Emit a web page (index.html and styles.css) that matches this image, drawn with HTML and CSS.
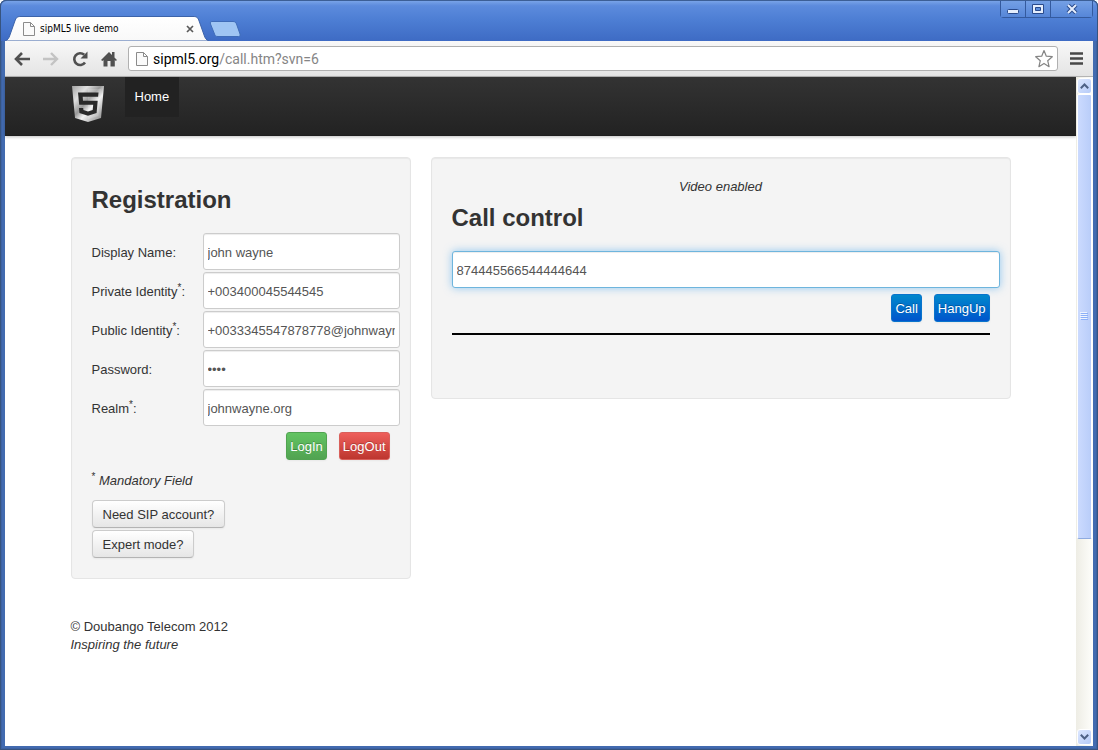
FILE: index.html
```html
<!DOCTYPE html>
<html lang="en">
<head>
  <meta charset="UTF-8" />
  <meta name="viewport" content="width=device-width, initial-scale=1.0"/>
  <title>sipML5 live demo</title>
  <link rel="stylesheet" href="styles.css">
</head>
<body>
  <div class="window">

    <!-- Title bar -->
    <div class="titlebar">
      <div class="tab">
        <svg class="tab-shape" viewBox="0 0 206 25" preserveAspectRatio="none">
          <defs>
            <linearGradient id="tabFill" x1="0" y1="0" x2="0" y2="1">
              <stop offset="0" stop-color="#ffffff"/>
              <stop offset="1" stop-color="#f8f8f8"/>
            </linearGradient>
          </defs>
          <path d="M0 25 C3 24 4 22 5 19 L10 5 C11 2 12 0.5 15 0.5 L191 0.5 C194 0.5 195 2 196 5 L201 19 C202 22 203 24 206 25 Z" fill="url(#tabFill)" stroke="#3b62a8" stroke-width="1"/>
        </svg>
        <svg class="page-icon" viewBox="0 0 12 14"><path d="M1 .5h6.500L11.500 4.500v9H.5v-13zM7.500 .5v4h4" fill="#fafafa" stroke="#8b8b8b"/></svg>
        <span class="tab-title">sipML5 live demo</span>
        <button class="tab-close" aria-label="Close tab">
          <svg width="8" height="8" viewBox="0 0 8 8"><path d="M1 1l6 6M7 1L1 7" stroke="#5a5a5a" stroke-width="1.700"/></svg>
        </button>
      </div>
      <button class="new-tab" aria-label="New tab">
        <svg width="32" height="16" viewBox="0 0 32 16"><path d="M3 .5h21c2 0 3 1 3.500 2.500L31 13c.4 1.500 0 2.500-1.500 2.500H9C7 15.500 6 15 5.500 13L1.500 3C1 1.500 1.500 .5 3 .5z" fill="#9fc5f3" stroke="#3f6cb8"/></svg>
      </button>
      <div class="window-controls">
        <button aria-label="Minimize"><svg width="12" height="10" viewBox="0 0 12 10"><rect x=".5" y="5.500" width="11" height="4" rx="1" fill="#e4edfc" stroke="#294a8c"/></svg></button>
        <button aria-label="Maximize"><svg width="12" height="10" viewBox="0 0 12 10"><path d="M.5 .5h11v9H.5z" fill="#e4edfc" stroke="#294a8c"/><path d="M3.500 3.500h5v3h-5z" fill="#5d8edb" stroke="#294a8c"/></svg></button>
        <button class="wide" aria-label="Close"><svg width="12" height="10" viewBox="0 0 12 10"><path d="M2 1l8 8M10 1L2 9" stroke="#294a8c" stroke-width="4"/><path d="M2 1l8 8M10 1L2 9" stroke="#e4edfc" stroke-width="2"/></svg></button>
      </div>
    </div>

    <!-- Toolbar -->
    <div class="toolbar">
      <button class="tool" aria-label="Back"><svg width="16" height="14" viewBox="0 0 16 14"><path d="M8 1L2 7l6 6M2 7h14" fill="none" stroke="#505050" stroke-width="2.600"/></svg></button>
      <button class="tool" aria-label="Forward"><svg width="16" height="14" viewBox="0 0 16 14"><path d="M8 1l6 6-6 6M14 7H0" fill="none" stroke="#c3c3c3" stroke-width="2.400"/></svg></button>
      <button class="tool" aria-label="Reload"><svg width="16" height="16" viewBox="0 0 16 16"><path d="M13 11.500A5.900 5.900 0 1 1 12.200 3.800" fill="none" stroke="#505050" stroke-width="2.600"/><path d="M15.500 .5v7H8.500z" fill="#505050"/></svg></button>
      <button class="tool" aria-label="Home page"><svg width="16" height="16" viewBox="0 0 16 16"><path d="M8 1l3 3V1h2.500v5.500L16 9l-1.200 1-1-1v6.500H9.500V10h-3v5.500H2.500V9l-1 1L0 9z" fill="#505050"/></svg></button>
      <div class="address">
        <svg class="page-icon" viewBox="0 0 12 14"><path d="M1 .5h6.500L11.500 4.500v9H.5v-13zM7.500 .5v4h4" fill="#fafafa" stroke="#8b8b8b"/></svg>
        <span class="url"><span class="host">sipml5.org</span>/call.htm?svn=6</span>
        <svg width="20" height="19" viewBox="0 0 20 19"><path d="M10 1.500l2.300 5.700 6 .5-4.600 4 1.400 6-5.100-3.300-5.100 3.300 1.400-6-4.600-4 6-.5z" fill="#fff" stroke="#858585" stroke-width="1.200" stroke-linejoin="round"/></svg>
      </div>
      <button class="menu" aria-label="Menu"><svg width="13" height="13" viewBox="0 0 13 13"><path d="M0 1.500h13M0 6.500h13M0 11.500h13" stroke="#484848" stroke-width="2.600"/></svg></button>
    </div>

    <div class="viewport">
      <div class="page">
        <div class="navbar">
          <div class="container navbar-inner">
            <a class="brand" href="#" aria-label="sipML5">
              <svg width="34" height="38" viewBox="0 0 34 38">
                <defs>
                  <linearGradient id="shield" x1="0" y1="0" x2="1" y2="1">
                    <stop offset="0" stop-color="#a2a2a2"/>
                    <stop offset=".25" stop-color="#e0e0e0"/>
                    <stop offset=".45" stop-color="#999999"/>
                    <stop offset=".6" stop-color="#f2f2f2"/>
                    <stop offset="1" stop-color="#777777"/>
                  </linearGradient>
                </defs>
                <path d="M1 1h32l-3 32-13 4-13-4z" fill="url(#shield)"/>
                <path d="M17 4h13l-2.500 27L17 34z" fill="#fff" opacity=".18"/>
                <path d="M7 7.500h20.500l-.4 4.200H11.700l.3 4h14.700l-1.100 12.300-8.600 2.700-8.600-2.700-.4-5h4.200l.2 2 4.600 1.400 4.700-1.400.5-5.200H8.200z" fill="#2a2a2a"/>
              </svg>
            </a>
            <a class="nav-link" href="#">Home</a>
          </div>
        </div>

        <div class="container row">
          <!-- Registration -->
          <form class="well registration">
            <h2>Registration</h2>
            <div class="fields">
              <label for="displayName">Display Name:</label>
              <div><input type="text" id="displayName" value="john wayne"></div>
              <label for="privateIdentity">Private Identity<sup>*</sup>:</label>
              <div><input type="text" id="privateIdentity" value="+003400045544545"></div>
              <label for="publicIdentity">Public Identity<sup>*</sup>:</label>
              <div><input type="text" id="publicIdentity" value="+0033345547878778@johnwayn"></div>
              <label for="password">Password:</label>
              <div><input type="password" id="password" value="1234"></div>
              <label for="realm">Realm<sup>*</sup>:</label>
              <div><input type="text" id="realm" value="johnwayne.org"></div>
            </div>
            <div class="actions">
              <button type="button" class="btn btn-small btn-success">LogIn</button>
              <button type="button" class="btn btn-small btn-danger">LogOut</button>
            </div>
            <p class="mandatory"><sup>*</sup> <i>Mandatory Field</i></p>
            <div class="links">
              <button type="button" class="btn">Need SIP account?</button>
              <button type="button" class="btn">Expert mode?</button>
            </div>
          </form>

          <!-- Call control -->
          <form class="well call">
            <p class="status"><i>Video enabled</i></p>
            <h2>Call control</h2>
            <div><input type="text" class="focused" aria-label="Phone number" value="874445566544444644"></div>
            <div class="actions">
              <button type="button" class="btn btn-small btn-primary">Call</button>
              <button type="button" class="btn btn-small btn-primary">HangUp</button>
            </div>
            <hr>
          </form>
        </div>

        <footer class="container">
          <p>© Doubango Telecom 2012<br><i>Inspiring the future</i></p>
        </footer>
      </div>

      <!-- Scrollbar -->
      <div class="scrollbar">
        <button class="scroll-btn" aria-label="Scroll up"><svg width="9" height="6" viewBox="0 0 9 6"><path d="M.8 5.200l3.700-3.700 3.700 3.700" fill="none" stroke="#4d6185" stroke-width="2"/></svg></button>
        <div class="track">
          <div class="thumb"><span></span><span></span><span></span><span></span></div>
        </div>
        <button class="scroll-btn" aria-label="Scroll down"><svg width="9" height="6" viewBox="0 0 9 6"><path d="M.8 .8l3.700 3.700L8.200 .8" fill="none" stroke="#4d6185" stroke-width="2"/></svg></button>
      </div>
    </div>
  </div>
</body>
</html>
```
FILE: styles.css
```css
* {
  box-sizing: border-box;
}

body {
  margin: 0;
  font-family: "Liberation Sans", Arial, sans-serif;
  font-size: 13px;
  line-height: 18px;
  color: #333;
  background: #fff;
}

h2, p {
  margin: 0;
}

button {
  font: inherit;
  cursor: pointer;
}

svg {
  display: block;
}

/* Browser window */
.window {
  display: flex;
  flex-direction: column;
  min-height: 100vh;
  padding: 0 5px 4px;
  border-radius: 6px 6px 0 0;
  background: #426bb0;
  box-shadow: inset 0 0 0 1px #37547f, inset 0 0 0 2px #3d62a3;
}

.titlebar {
  display: flex;
  align-items: flex-end;
  height: 41px;
  margin: 0 -4px;
  padding-left: 4px;
  border-top: 1px solid #3c5f96;
  border-radius: 6px 6px 0 0;
  background: linear-gradient(#78a3e8, #5c8bdd 12%, #4c7dd3 50%, #3e6bc4);
}

.tab {
  position: relative;
  display: flex;
  align-items: center;
  width: 204px;
  height: 25px;
  padding: 0 15px 0 18px;
}

.tab-shape {
  position: absolute;
  top: 0;
  left: 0;
  width: 100%;
  height: 100%;
}

.page-icon {
  position: relative;
  width: 12px;
  height: 14px;
  flex: none;
}

.tab-title {
  position: relative;
  flex: 1;
  margin-left: 5px;
  font-family: "DejaVu Sans Condensed", "DejaVu Sans", sans-serif;
  font-size: 10px;
  color: #000;
}

.tab-close, .new-tab, .tool, .menu {
  position: relative;
  padding: 0;
  border: none;
  background: none;
}

.new-tab {
  margin-bottom: 4px;
}

.window-controls {
  display: flex;
  align-self: flex-start;
  margin: 0 4px 0 auto;
  border: 1px solid #345a9e;
  border-top: none;
  border-radius: 0 0 4px 4px;
}

.window-controls button {
  display: flex;
  align-items: center;
  justify-content: center;
  width: 25px;
  height: 16px;
  padding: 0;
  border: none;
  border-right: 1px solid #345a9e;
  background: linear-gradient(#74a0e5, #5686d8);
}

.window-controls .wide {
  width: 41px;
  border-right: none;
}

.toolbar {
  display: flex;
  align-items: center;
  height: 36px;
  padding: 0 10px 0 9px;
  border-bottom: 1px solid #b4b4b4;
  background: linear-gradient(#f8f8f8, #e4e4e4);
}

.tool {
  margin-right: 13px;
}

.address {
  display: flex;
  flex: 1;
  align-items: center;
  height: 25px;
  margin: 0 12px 0 -2px;
  padding: 0 3px 0 7px;
  border: 1px solid #b0b0b0;
  border-radius: 3px;
  background: #fff;
}

.url {
  flex: 1;
  margin-left: 5px;
  font-family: Roboto, Tahoma, sans-serif;
  font-size: 14px;
  color: #858585;
}

.host {
  color: #000;
}

.viewport {
  display: flex;
  flex: 1;
  background: #fff;
}

/* Page */
.page {
  flex: 1;
  min-width: 0;
}

.container {
  width: calc(100% - 130px);
  max-width: 940px;
  margin: 0 auto;
}

.navbar {
  margin-bottom: 21px;
  background: linear-gradient(#333, #222);
  box-shadow: 0 1px 3px rgba(0,0,0,0.25), inset 0 -1px 0 rgba(0,0,0,0.1);
}

.navbar-inner {
  display: flex;
  height: 59px;
}

.brand {
  padding: 8px 20px 0 0;
}

.nav-link {
  height: 40px;
  padding: 11px 10px;
  color: #fff;
  text-decoration: none;
  background: #222;
}

.row {
  display: flex;
  align-items: flex-start;
  gap: 20px;
}

.well {
  padding: 20px;
  border: 1px solid #e5e5e5;
  border-radius: 4px;
  background: #f4f4f4;
  box-shadow: inset 0 1px 1px rgba(0,0,0,0.05);
}

.registration {
  width: 340px;
}

.call {
  flex: 1;
  min-height: 242px;
}

h2 {
  margin-bottom: 11px;
  font-size: 24px;
  line-height: 44px;
}

.fields {
  display: grid;
  grid-template-columns: 111px 1fr;
  row-gap: 2px;
  align-items: center;
}

label {
  padding-top: 3px;
}

sup {
  font-size: 10px;
  line-height: 0;
}

input {
  display: block;
  box-sizing: content-box;
  width: 100%;
  height: 34px;
  padding: 1px 4px 0;
  border: 1px solid #ccc;
  border-radius: 3px;
  font: inherit;
  color: #555;
  background: #fff;
  box-shadow: inset 0 1px 1px rgba(0,0,0,0.075);
}

.focused {
  border-color: #6eb5dd;
  outline: none;
  box-shadow: inset 0 1px 1px rgba(0,0,0,0.075), 0 0 8px rgba(82,168,236,0.6);
}

.actions {
  display: flex;
  justify-content: flex-end;
  gap: 12px;
  padding-top: 6px;
}

.btn {
  height: 28px;
  padding: 1px 10px 0;
  border: 1px solid #ccc;
  border-bottom-color: #b3b3b3;
  border-radius: 4px;
  color: #333;
  background: linear-gradient(#fff, #e6e6e6);
  box-shadow: 0 1px 2px rgba(0,0,0,0.05);
}

.btn-small {
  padding: 1px 3px 0;
  border-radius: 3px;
  color: #fff;
  text-shadow: 0 -1px 0 rgba(0,0,0,0.25);
}

.btn-success {
  border-color: #51a351;
  background: linear-gradient(#62c462, #51a351);
}

.btn-danger {
  border-color: #d9605b;
  background: linear-gradient(#ee5f5b, #bd362f);
}

.btn-primary {
  border-color: #0a74cc;
  background: linear-gradient(#0088cc, #0055cc);
}

.mandatory {
  margin: 12px 0 10px;
}

.links {
  display: flex;
  flex-direction: column;
  align-items: flex-start;
  gap: 2px;
}

.status {
  text-align: center;
}

hr {
  height: 2px;
  margin: 11px 0 0;
  border: none;
  background: #000;
}

footer {
  padding-top: 39px;
}

/* Scrollbar */
.scrollbar {
  display: flex;
  flex-direction: column;
  width: 17px;
  padding: 1px;
  background: linear-gradient(90deg, #eeede5, #fefefb);
}

.scroll-btn {
  display: flex;
  align-items: center;
  justify-content: center;
  height: 16px;
  padding: 0;
  border: 1px solid #fff;
  border-radius: 3px;
  background: linear-gradient(135deg, #dce7ff, #b6cbf8);
}

.track {
  flex: 1;
}

.thumb {
  display: flex;
  flex-direction: column;
  align-items: center;
  justify-content: center;
  gap: 1px;
  height: 70%;
  border: 1px solid #fff;
  border-bottom-color: #8fabe0;
  border-radius: 2px;
  background: linear-gradient(90deg, #cbdafe, #b9cdf9);
}

.thumb span {
  width: 7px;
  height: 1px;
  background: #8cb0f8;
  box-shadow: -1px -1px 0 #eef4fe;
}
```
